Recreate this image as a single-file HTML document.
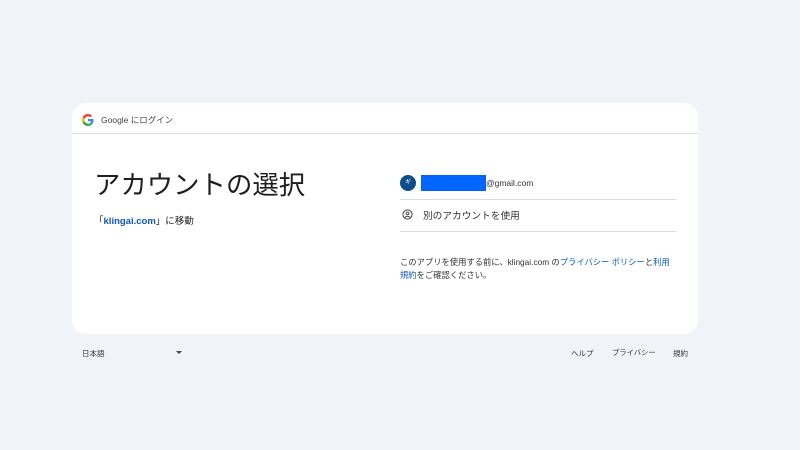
<!DOCTYPE html>
<html><head><meta charset="utf-8"><style>
body{margin:0;width:800px;height:450px;background:#f0f4f9;font-family:"Liberation Sans","Noto Sans CJK JP",sans-serif;color:#1f1f1f;position:relative;overflow:hidden}
.card{position:absolute;left:72px;top:103px;width:626px;height:231px;background:#fff;border-radius:14px}
.hdr{position:absolute;left:0;top:0;width:626px;height:30px;border-bottom:1px solid #dadce0}
.abs{position:absolute;white-space:nowrap}
a{color:#0b57d0;text-decoration:none}
</style></head><body>
<div class="card">
<div class="hdr">
<svg class="abs" style="left:10px;top:11px" width="12" height="12" viewBox="0 0 48 48"><path fill="#EA4335" d="M24 9.5c3.5 0 6.6 1.2 9.1 3.6l6.8-6.8C35.8 2.4 30.3 0 24 0 14.6 0 6.6 5.4 2.6 13.2l7.9 6.2C12.4 13.7 17.7 9.5 24 9.5z"/><path fill="#4285F4" d="M46.1 24.5c0-1.6-.1-3.1-.4-4.5H24v9h12.4c-.5 2.9-2.2 5.4-4.7 7l7.6 5.9c4.4-4.1 6.8-10.1 6.8-17.4z"/><path fill="#FBBC05" d="M10.5 28.6c-.5-1.4-.8-3-.8-4.6s.3-3.2.8-4.6l-7.9-6.2C.9 16.5 0 20.1 0 24s.9 7.5 2.6 10.8l7.9-6.2z"/><path fill="#34A853" d="M24 48c6.5 0 11.9-2.1 15.9-5.8l-7.6-5.9c-2.1 1.4-4.9 2.3-8.3 2.3-6.3 0-11.6-4.2-13.5-9.9l-7.9 6.2C6.6 42.6 14.6 48 24 48z"/></svg>
<div class="abs" style="left:29px;top:11px;font-size:8.5px;color:#444">Google にログイン</div>
</div>
<div class="abs" style="left:22px;top:60px;font-size:26.4px;color:#1f1f1f">アカウントの選択</div>
<div class="abs" style="left:22px;top:110px;font-size:9.5px">「<a style="font-weight:bold">klingai.com</a>」に移動</div>
<div class="abs" style="left:328px;top:72px;width:16px;height:16px;border-radius:50%;background:#0b4d8c;color:#fff;font-size:6px;text-align:center;line-height:16px">ギ</div>
<div class="abs" style="left:349px;top:72px;width:65px;height:16px;background:#0066ff"></div>
<div class="abs" style="left:414px;top:75px;font-size:8.5px;color:#333">@gmail.com</div>
<div class="abs" style="left:328px;top:96px;width:276px;height:1px;background:#dadce0"></div>
<svg class="abs" style="left:330px;top:106px" width="11" height="11" viewBox="0 0 12 12"><circle cx="6" cy="6" r="5" fill="none" stroke="#444" stroke-width="1.1"/><circle cx="6" cy="4.8" r="1.6" fill="none" stroke="#444" stroke-width="1"/><path d="M3 9.2c1.5-1.6 4.5-1.6 6 0" fill="none" stroke="#444" stroke-width="1"/></svg>
<div class="abs" style="left:351px;top:105px;font-size:9.7px;color:#333">別のアカウントを使用</div>
<div class="abs" style="left:328px;top:128px;width:276px;height:1px;background:#dadce0"></div>
<div class="abs" style="left:328px;top:153px;font-size:8.3px;line-height:12.5px;color:#333">このアプリを使用する前に、klingai.com の<a>プライバシー ポリシー</a>と<a>利用</a><br><a>規約</a>をご確認ください。</div>
</div>
<div class="abs" style="left:82px;top:348px;font-size:7.5px;color:#333">日本語</div>
<div class="abs" style="left:176px;top:351px;width:0;height:0;border-left:3px solid transparent;border-right:3px solid transparent;border-top:3px solid #444"></div>
<div class="abs" style="left:571px;top:348px;font-size:7.5px;color:#333">ヘルプ</div>
<div class="abs" style="left:612px;top:348px;font-size:7.3px;color:#333">プライバシー</div>
<div class="abs" style="left:673px;top:348px;font-size:7.5px;color:#333">規約</div>
</body></html>
